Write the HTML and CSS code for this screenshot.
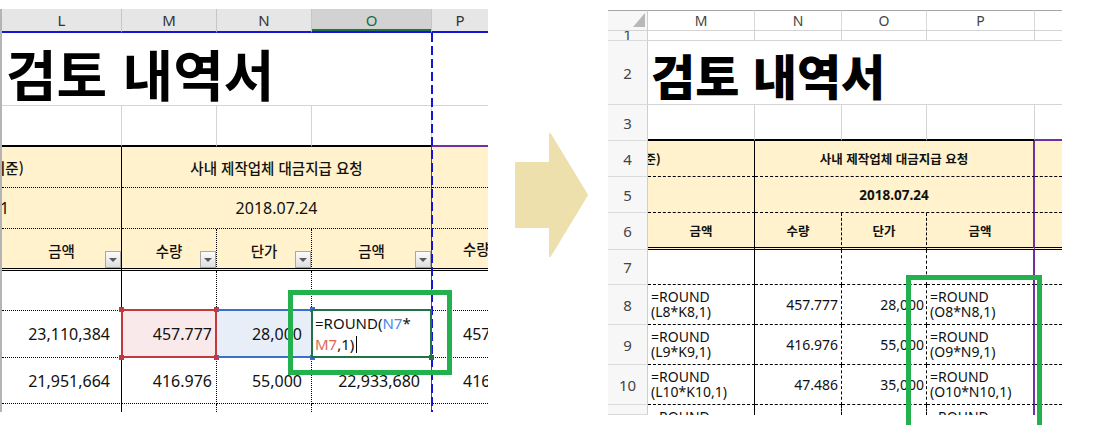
FILE: index.html
```html
<!DOCTYPE html>
<html lang="ko">
<head>
<meta charset="utf-8">
<title>검토 내역서</title>
<link rel="stylesheet" href="styles.css">
</head>
<body>
<div class="page">
  <section class="sheet-a">
    <div class="grid-a">
      <div class="hd">L</div>
      <div class="hd">M</div>
      <div class="hd">N</div>
      <div class="hd hd-sel">O</div>
      <div class="hd hd-last">P</div>

      <div class="a-title">검토 내역서</div>

      <div class="a3"></div>
      <div class="a3"></div>
      <div class="a3"></div>
      <div class="a3"></div>
      <div class="a3 a3-last"></div>

      <div class="ac y vl clip kh"><span class="lead-a">기준)</span></div>
      <div class="ac y vp span3 kh">사내 제작업체 대금지급 요청</div>
      <div class="ac y"></div>

      <div class="ac y vl clip"><span class="lead-1">1</span></div>
      <div class="ac y vp span3">2018.07.24</div>
      <div class="ac y"></div>

      <div class="ac y vl dbl ctr kh">금액<span class="dd"></span></div>
      <div class="ac y vd dbl ctr kh">수량<span class="dd"></span></div>
      <div class="ac y vd dbl ctr kh">단가<span class="dd"></span></div>
      <div class="ac y vp dbl ctr kh">금액<span class="dd"></span></div>
      <div class="ac y dbl kh p-left">수량</div>

      <div class="ac vl"></div>
      <div class="ac vd"></div>
      <div class="ac vd"></div>
      <div class="ac vp"></div>
      <div class="ac"></div>

      <div class="ac vl r acc">23,110,384</div>
      <div class="ac vd r sel-red">457.777<span class="frame red"><i class="h tl"></i><i class="h tr"></i><i class="h bl"></i><i class="h br"></i></span></div>
      <div class="ac vd r acc2 sel-blue">28,000<span class="frame blue"><i class="h tr"></i><i class="h br"></i></span></div>
      <div class="ac vp edit-cell"><span class="frame green"><span class="edit">=ROUND(<b class="ref1">N7</b>*<br><b class="ref2">M7</b>,1)<i class="caret"></i></span><i class="h br"></i></span></div>
      <div class="ac p-left">457.777</div>

      <div class="ac vl r acc">21,951,664</div>
      <div class="ac vd r">416.976</div>
      <div class="ac vd r acc2">55,000</div>
      <div class="ac vp r acc">22,933,680</div>
      <div class="ac p-left">416.976</div>

      <div class="ac vl nb"></div>
      <div class="ac vd nb"></div>
      <div class="ac vd nb"></div>
      <div class="ac vp nb"></div>
      <div class="ac nb"></div>
    </div>
    <div class="pb-v"></div>
  </section>

  <div class="arrow">
    <svg width="120" height="425" viewBox="0 0 120 425">
      <polygon points="28,163 62,163 62,134 99,195 62,256 62,227 28,227" fill="#ede0ac" stroke="#ede0ac" stroke-width="2" stroke-linejoin="round"/>
    </svg>
  </div>

  <section class="sheet-b">
    <div class="grid-b">
      <div class="hb corner"><svg width="12" height="14" viewBox="0 0 12 14"><polygon points="12,0 12,14 0,14" fill="#b8b8b8"/></svg></div>
      <div class="hb">M</div>
      <div class="hb">N</div>
      <div class="hb">O</div>
      <div class="hb">P</div>
      <div class="hb hb-last"></div>

      <div class="rh rh-1">1</div>
      <div class="g"></div>
      <div class="g"></div>
      <div class="g"></div>
      <div class="g"></div>
      <div class="g g-last"></div>

      <div class="rh">2</div>
      <div class="b-title">검토 내역서</div>

      <div class="rh">3</div>
      <div class="g g3"></div>
      <div class="g g3"></div>
      <div class="g g3"></div>
      <div class="g g3"></div>
      <div class="g g3 g3-last"></div>

      <div class="rh">4</div>
      <div class="bc y wl kb"><span class="lead-b">기준)</span></div>
      <div class="bc y wp span3 kb">사내 제작업체 대금지급 요청</div>
      <div class="bc y"></div>

      <div class="rh">5</div>
      <div class="bc y wl"></div>
      <div class="bc y wp span3 nb-bold">2018.07.24</div>
      <div class="bc y"></div>

      <div class="rh">6</div>
      <div class="bc y wl bdbl ctr kb">금액</div>
      <div class="bc y wd bdbl ctr kb">수량</div>
      <div class="bc y wd bdbl ctr kb">단가</div>
      <div class="bc y wp bdbl ctr kb">금액</div>
      <div class="bc y bdbl"></div>

      <div class="rh">7</div>
      <div class="bc wl"></div>
      <div class="bc wd"></div>
      <div class="bc wd"></div>
      <div class="bc wp"></div>
      <div class="bc"></div>

      <div class="rh">8</div>
      <div class="bc wl f"><span>=ROUND</span><span>(L8*K8,1)</span></div>
      <div class="bc wd r">457.777</div>
      <div class="bc wd r r2">28,000</div>
      <div class="bc wp f"><span>=ROUND</span><span>(O8*N8,1)</span></div>
      <div class="bc"></div>

      <div class="rh">9</div>
      <div class="bc wl f"><span>=ROUND</span><span>(L9*K9,1)</span></div>
      <div class="bc wd r">416.976</div>
      <div class="bc wd r r2">55,000</div>
      <div class="bc wp f"><span>=ROUND</span><span>(O9*N9,1)</span></div>
      <div class="bc"></div>

      <div class="rh">10</div>
      <div class="bc wl f"><span>=ROUND</span><span>(L10*K10,1)</span></div>
      <div class="bc wd r">47.486</div>
      <div class="bc wd r r2">35,000</div>
      <div class="bc wp f"><span>=ROUND</span><span>(O10*N10,1)</span></div>
      <div class="bc"></div>

      <div class="rh"></div>
      <div class="bc wl f nb"><span>=ROUND</span></div>
      <div class="bc wd nb"></div>
      <div class="bc wd nb"></div>
      <div class="bc wp f nb"><span>=ROUND</span></div>
      <div class="bc nb"></div>
    </div>
  </section>

  <div class="mark mark-a"></div>
  <div class="mark mark-b"></div>
</div>
</body>
</html>
```

FILE: styles.css
```css
* { box-sizing: border-box; margin: 0; padding: 0; }
html, body { width: 1093px; height: 425px; overflow: hidden; background: #fff; }
body { font-family: "Noto Sans", "Noto Sans CJK KR", sans-serif; color: #000; }

.page { position: relative; display: flex; width: 1093px; height: 425px; }

/* ---------- left sheet ---------- */
.sheet-a { position: relative; flex: none; width: 488px; height: 412px; overflow: hidden; padding-top: 9px; }
.grid-a {
  display: grid;
  grid-template-columns: 120px 95px 95px 120px 56px;
  grid-template-rows: 24px 73px 41px 41px 41px 42px 40px 47px 46px 8px;
  border-left: 2px solid #b4b4b4;
}
.hd {
  display: flex; align-items: center; justify-content: center;
  background: #e6e6e6; color: #333; font-size: 15px;
  border-right: 1px solid #c6c6c6; border-bottom: 2px solid #1515d5;
}
.hd-sel { background: #d2d2d2; color: #1e6b41; box-shadow: inset 0 -2px 0 #217346; }
.hd-last { border-right: 0; }

.a-title {
  grid-column: 1 / -1; display: flex; align-items: center;
  padding: 6px 0 0 4px; border-bottom: 1px solid #d4d4d4;
  font-family: "Noto Sans CJK KR", sans-serif; font-weight: 700; font-size: 55px;
  line-height: 1; white-space: nowrap;
}
.a3 { border-right: 1px solid #d4d4d4; border-bottom: 2px solid #000; }
.a3-last { border-right: 0; border-bottom-color: #7030a0; }

.ac {
  position: relative; display: flex; align-items: center;
  border-bottom: 1px dotted #000; font-size: 16px; white-space: nowrap; color: #111;
}
.ac.y { background: #fff2cc; }
.vl { border-right: 1px solid #000; }
.vd { border-right: 1px dotted #000; }
.vp { border-right: 1px solid #7030a0; }
.ac.dbl { border-bottom: 3px double #000; }
.ac.nb { border-bottom: 0; }
.clip { overflow: hidden; }
.span3 { grid-column: span 3; justify-content: center; }
.ctr { justify-content: center; padding-top: 3px; }
.r { justify-content: flex-end; padding-right: 4px; }
.r.acc { padding-right: 11px; }
.r.acc2 { padding-right: 9px; }
.p-left { padding-left: 31px; }
.kh { font-family: "Noto Sans CJK KR", sans-serif; font-size: 14.5px; font-weight: 500; }
.lead-a { margin-left: -10px; }
.lead-1 { margin-left: -2px; }

.dd {
  position: absolute; right: 0; bottom: 0; width: 16px; height: 17px;
  border: 1px solid #a8a8a8; background: linear-gradient(#fbfbfb, #dedede);
  display: flex; align-items: center; justify-content: center;
}
.dd::after {
  content: ""; border-left: 4px solid transparent; border-right: 4px solid transparent;
  border-top: 4px solid #5a5a5a; margin-top: 1px;
}

.sel-red { background: #f9e9ea; }
.sel-blue { background: #e8eef8; }
.frame { position: absolute; z-index: 3; left: -1px; top: -2px; right: -1px; bottom: -1px; border: 2px solid; }
.frame.red { border-color: #c1393e; }
.frame.blue { left: 0; border-width: 2px 0; border-color: #3b6fc9; }
.frame.green { border-color: #217346; background: #fff; }
.h { position: absolute; width: 5px; height: 5px; }
.red .h { background: #c1393e; }
.blue .h { background: #3b6fc9; }
.green .h { background: #217346; }
.h.tl { left: -4px; top: -4px; }
.h.tr { right: -4px; top: -4px; }
.h.bl { left: -4px; bottom: -4px; }
.h.br { right: -4px; bottom: -4px; }
.blue .h.tr, .blue .h.br { right: -3px; }
.edit { display: block; padding: 2px 0 0 2px; font-size: 15px; line-height: 21px; color: #111; white-space: nowrap; }
.edit b { font-weight: 400; }
.ref1 { color: #4a86e8; }
.ref2 { color: #e0665a; }
.caret { display: inline-block; width: 1px; height: 17px; background: #000; margin-left: 2px; vertical-align: -3px; }

.pb-v {
  position: absolute; z-index: 2; left: 431px; top: 33px; width: 2px; height: 379px;
  background: repeating-linear-gradient(to bottom, #1515d5 0 9px, transparent 9px 13px);
}

/* ---------- arrow ---------- */
.arrow { flex: none; width: 120px; height: 425px; }
.arrow svg { display: block; }

/* ---------- right sheet ---------- */
.sheet-b { position: relative; flex: none; width: 454px; height: 415px; overflow: hidden; padding-top: 10px; }
.grid-b {
  display: grid;
  grid-template-columns: 40px 107px 87px 85px 108px 27px;
  grid-template-rows: 21px 10px 64px 36px 36px 36px 37px 35px 40px 40px 40px 10px;
}
.hb {
  display: flex; align-items: center; justify-content: center;
  background: #fff; color: #444; font-size: 14px;
  border-top: 1px solid #a6a6a6; border-right: 1px solid #d8d8d8; border-bottom: 1px solid #d4d4d4;
}
.hb-last { border-right: 0; }
.corner { justify-content: flex-end; align-items: flex-end; padding: 0 2px 3px 0; background: #f7f7f7; border-right-color: #cfcfcf; }
.corner svg { display: block; }

.rh {
  display: flex; align-items: center; justify-content: center; overflow: hidden;
  background: #f7f7f7; color: #444; font-size: 15px;
  border-right: 1px solid #cfcfcf; border-bottom: 1px solid #dadada;
}
.rh-1 { align-items: flex-end; line-height: 12px; }

.g { border-right: 1px solid #d4d4d4; border-bottom: 1px solid #d4d4d4; }
.g-last { border-right: 0; }
.g3 { border-bottom: 2px solid #000; }
.g3-last { border-right: 0; border-bottom-color: #7030a0; }

.b-title {
  grid-column: 2 / -1; display: flex; align-items: center;
  padding: 2px 0 0 3px; border-bottom: 1px solid #d4d4d4;
  font-family: "Noto Sans CJK KR", sans-serif; font-weight: 900; font-size: 48px;
  line-height: 1; white-space: nowrap;
}

.bc {
  position: relative; display: flex; align-items: center; overflow: hidden;
  border-bottom: 1px dashed #000; font-size: 14px; white-space: nowrap; color: #111;
}
.bc.y { background: #fff2cc; }
.wl { border-right: 1px solid #000; }
.wd { border-right: 1px dashed #000; }
.wp { border-right: 2px solid #7030a0; }
.bc.bdbl { border-bottom: 3px double #000; }
.bc.nb { border-bottom: 0; }
.bc.ctr { padding-top: 0; }
.bc.r { padding-right: 3px; }
.bc.r2 { padding-right: 2px; }
.kb { font-family: "Noto Sans CJK KR", sans-serif; font-size: 12.5px; font-weight: 700; }
.nb-bold { font-size: 13.5px; font-weight: 700; }
.lead-b { margin-left: -15px; }
.f { flex-direction: column; align-items: flex-start; justify-content: flex-start; padding: 4px 0 0 3px; line-height: 15px; }

/* ---------- annotation boxes ---------- */
.mark { position: absolute; z-index: 6; border: 5px solid #22b14c; }
.mark-a { left: 288px; top: 290px; width: 164px; height: 85px; }
.mark-b { left: 906px; top: 275px; width: 136px; height: 160px; }
```
